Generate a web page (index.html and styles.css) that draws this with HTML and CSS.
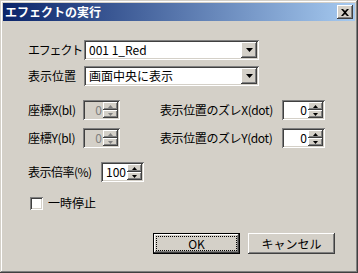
FILE: index.html
```html
<!DOCTYPE html>
<html lang="ja">

<head>
  <meta charset="UTF-8">
  <title>エフェクトの実行</title>
  <link rel="stylesheet" href="styles.css">
</head>

<body>

  <div class="window">
    <div class="titlebar">
      <span class="title">エフェクトの実行</span>
      <button class="close-btn">
        <svg width="8" height="7" viewBox="0 0 8 7"><path d="M0 0h2l2 2 2-2h2L5 3.5 8 7H6L4 5 2 7H0l3-3.5z" fill="#000"/></svg>
      </button>
    </div>

    <div class="content">
      <div class="row row-1">
        <span class="label label-combo narrow">エフェクト</span>
        <div class="combo sunken">
          <span class="combo-text">001 1_Red</span>
          <span class="drop raised"><svg width="7" height="4" viewBox="0 0 7 4"><path d="M0 0h7L3.5 4z" fill="#000"/></svg></span>
        </div>
      </div>

      <div class="row row-2">
        <span class="label label-combo">表示位置</span>
        <div class="combo sunken">
          <span class="combo-text">画面中央に表示</span>
          <span class="drop raised"><svg width="7" height="4" viewBox="0 0 7 4"><path d="M0 0h7L3.5 4z" fill="#000"/></svg></span>
        </div>
      </div>

      <div class="row row-3">
        <span class="label label-coord">座標X(bl)</span>
        <div class="spin sunken disabled spin-small">
          <span class="spin-value">0</span>
          <span class="spin-btns">
            <span class="spin-btn raised"><svg width="5" height="3" viewBox="0 0 5 3"><path d="M2.5 0L5 3H0z"/></svg></span>
            <span class="spin-btn raised"><svg width="5" height="3" viewBox="0 0 5 3"><path d="M0 0h5L2.5 3z"/></svg></span>
          </span>
        </div>
        <span class="label label-offset">表示位置のズレX(dot)</span>
        <div class="spin sunken spin-wide">
          <span class="spin-value">0</span>
          <span class="spin-btns">
            <span class="spin-btn raised"><svg width="5" height="3" viewBox="0 0 5 3"><path d="M2.5 0L5 3H0z"/></svg></span>
            <span class="spin-btn raised"><svg width="5" height="3" viewBox="0 0 5 3"><path d="M0 0h5L2.5 3z"/></svg></span>
          </span>
        </div>
      </div>

      <div class="row row-4">
        <span class="label label-coord">座標Y(bl)</span>
        <div class="spin sunken disabled spin-small">
          <span class="spin-value">0</span>
          <span class="spin-btns">
            <span class="spin-btn raised"><svg width="5" height="3" viewBox="0 0 5 3"><path d="M2.5 0L5 3H0z"/></svg></span>
            <span class="spin-btn raised"><svg width="5" height="3" viewBox="0 0 5 3"><path d="M0 0h5L2.5 3z"/></svg></span>
          </span>
        </div>
        <span class="label label-offset">表示位置のズレY(dot)</span>
        <div class="spin sunken spin-wide">
          <span class="spin-value">0</span>
          <span class="spin-btns">
            <span class="spin-btn raised"><svg width="5" height="3" viewBox="0 0 5 3"><path d="M2.5 0L5 3H0z"/></svg></span>
            <span class="spin-btn raised"><svg width="5" height="3" viewBox="0 0 5 3"><path d="M0 0h5L2.5 3z"/></svg></span>
          </span>
        </div>
      </div>

      <div class="row row-5">
        <span class="label label-scale">表示倍率(%)</span>
        <div class="spin sunken spin-wide">
          <span class="spin-value">100</span>
          <span class="spin-btns">
            <span class="spin-btn raised"><svg width="5" height="3" viewBox="0 0 5 3"><path d="M2.5 0L5 3H0z"/></svg></span>
            <span class="spin-btn raised"><svg width="5" height="3" viewBox="0 0 5 3"><path d="M0 0h5L2.5 3z"/></svg></span>
          </span>
        </div>
      </div>

      <div class="row row-6">
        <span class="checkbox"></span>
        <span class="label">一時停止</span>
      </div>

      <div class="row row-7">
        <button class="btn btn-default"><span class="focus">OK</span></button>
        <button class="btn raised">キャンセル</button>
      </div>
    </div>
  </div>

</body>

</html>
```

FILE: styles.css
```css
body {
  margin: 0;
  background-color: #d4d0c8;
  font-family: "Noto Sans CJK JP", "Liberation Sans", sans-serif;
  font-size: 12px;
  color: #000;
}

.window {
  width: 358px;
  height: 273px;
  box-sizing: border-box;
  padding: 3px;
  background-color: #d4d0c8;
  box-shadow: inset -1px -1px #404040, inset 1px 1px #d4d0c8, inset -2px -2px #808080, inset 2px 2px #fff;
}

.titlebar {
  height: 18px;
  display: flex;
  align-items: center;
  justify-content: space-between;
  padding: 0 2px 0 2px;
  background: linear-gradient(to right, #0a246a, #a6caf0);
}

.title {
  color: #fff;
  font-weight: bold;
  font-size: 12px;
  line-height: 18px;
}

.close-btn {
  width: 16px;
  height: 14px;
  padding: 0;
  border: none;
  background-color: #d4d0c8;
  display: flex;
  align-items: center;
  justify-content: center;
  box-shadow: inset -1px -1px #404040, inset 1px 1px #fff, inset -2px -2px #808080;
}

.content {
  padding: 19px 20px 0 25px;
}

.row {
  display: flex;
  align-items: center;
}

.raised {
  background-color: #d4d0c8;
  box-shadow: inset -1px -1px #404040, inset 1px 1px #fff, inset -2px -2px #808080, inset 2px 2px #d4d0c8;
}

.sunken {
  box-shadow: inset 1px 1px #808080, inset -1px -1px #fff, inset 2px 2px #404040, inset -2px -2px #d4d0c8;
}

.label {
  white-space: nowrap;
  line-height: 14px;
  flex-shrink: 0;
}

.narrow {
  letter-spacing: -1.2px;
}

.label-combo {
  width: 56px;
}

.label-coord {
  width: 55px;
  letter-spacing: -0.3px;
}

.label-offset {
  width: 122px;
  margin-left: 40px;
  letter-spacing: -0.4px;
}

.label-scale {
  width: 73px;
  letter-spacing: -0.5px;
}

/* combos */
.combo {
  width: 175px;
  height: 20px;
  box-sizing: border-box;
  padding: 2px;
  display: flex;
  background-color: #fff;
}

.combo-text {
  flex: 1;
  padding-left: 3px;
  line-height: 16px;
}

.drop {
  width: 16px;
  height: 16px;
  display: flex;
  align-items: center;
  justify-content: center;
}

.row-2 {
  margin-top: 6px;
}

/* spins */
.spin {
  height: 20px;
  box-sizing: border-box;
  padding: 2px;
  display: flex;
  background-color: #fff;
}

.spin-small {
  width: 37px;
}

.spin-wide {
  width: 43px;
}

.spin.disabled {
  background-color: #d4d0c8;
  color: #808080;
}

.spin-value {
  flex: 1;
  text-align: right;
  padding-right: 1px;
  line-height: 16px;
}

.spin-btns {
  width: 15px;
  display: flex;
  flex-direction: column;
}

.spin-btn {
  height: 8px;
  display: flex;
  align-items: center;
  justify-content: center;
}

.spin-btn svg {
  fill: #000;
}

.disabled .spin-btn svg {
  fill: #808080;
}

.row-3 {
  margin-top: 14px;
}

.row-4 {
  margin-top: 8px;
}

.row-5 {
  margin-top: 14px;
}

.row-6 {
  margin-top: 14px;
}

.checkbox {
  width: 13px;
  height: 13px;
  box-sizing: border-box;
  margin: 0 5px 0 2px;
  background-color: #fff;
  box-shadow: inset 1px 1px #808080, inset -1px -1px #fff, inset 2px 2px #404040, inset -2px -2px #d4d0c8;
}

.row-7 {
  margin-top: 23px;
  justify-content: flex-end;
  gap: 8px;
}

.btn {
  width: 87px;
  height: 21px;
  padding: 0;
  border: none;
  font-family: "Noto Sans CJK JP", "Liberation Sans", sans-serif;
  font-size: 12px;
  color: #000;
  display: flex;
  align-items: center;
  justify-content: center;
}

.btn-default {
  background-color: #d4d0c8;
  border: 1px solid #000;
  box-shadow: inset -1px -1px #404040, inset 1px 1px #fff, inset -2px -2px #808080;
  padding: 3px;
}

.focus {
  flex: 1;
  align-self: stretch;
  display: flex;
  align-items: center;
  justify-content: center;
  outline: 1px dotted #000;
}
```
